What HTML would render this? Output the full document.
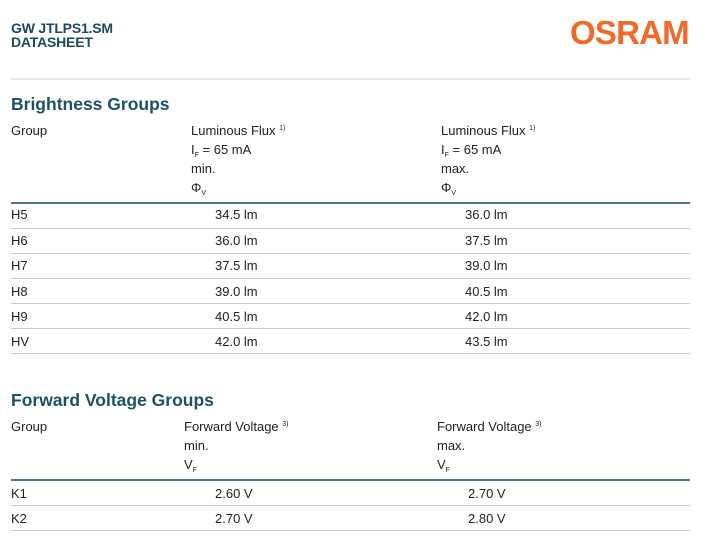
<!DOCTYPE html>
<html><head><style>
body{margin:0;width:705px;height:558px;background:#fff;position:relative;font-family:"Liberation Sans",sans-serif;color:#222;overflow:hidden}
.a{position:absolute;white-space:nowrap;font-size:13px;line-height:16px}
.t{color:#1d4a5c;font-weight:bold;font-size:14px;line-height:14px;letter-spacing:-0.2px}
.h{color:#1e5066;font-weight:bold;font-size:17.5px}
.l{position:absolute;left:11px;width:679px;height:1px;background:#c8c8c8}
.k{position:absolute;left:11px;width:679px;height:2px;background:#4e7488}
sup{font-size:7px;vertical-align:5px;line-height:0}
sub{font-size:7px;vertical-align:-3px;line-height:0}
</style></head><body>
<div class="a t" style="left:11px;top:21px">GW JTLPS1.SM</div>
<div class="a t" style="left:11px;top:35px">DATASHEET</div>
<div class="a" style="left:570px;top:15px;font-size:33px;line-height:36px;font-weight:bold;color:#f26a2a;letter-spacing:-0.8px">OSRAM</div>
<div style="position:absolute;left:11px;top:78px;width:679px;height:2px;background:#e3e8ec"></div>

<div class="a h" style="left:11px;top:94px;line-height:20px">Brightness Groups</div>
<div class="a" style="left:11px;top:123px">Group</div>
<div class="a" style="left:191px;top:123px">Luminous Flux <sup>1)</sup></div>
<div class="a" style="left:191px;top:142px">I<sub>F</sub> = 65 mA</div>
<div class="a" style="left:191px;top:161px">min.</div>
<div class="a" style="left:191px;top:180px">Φ<sub>V</sub></div>
<div class="a" style="left:441px;top:123px">Luminous Flux <sup>1)</sup></div>
<div class="a" style="left:441px;top:142px">I<sub>F</sub> = 65 mA</div>
<div class="a" style="left:441px;top:161px">max.</div>
<div class="a" style="left:441px;top:180px">Φ<sub>V</sub></div>
<div class="k" style="top:202px"></div>
<div class="a" style="left:11px;top:207px">H5</div><div class="a" style="left:215px;top:207px">34.5 lm</div><div class="a" style="left:465px;top:207px">36.0 lm</div>
<div class="l" style="top:228px"></div>
<div class="a" style="left:11px;top:233px">H6</div><div class="a" style="left:215px;top:233px">36.0 lm</div><div class="a" style="left:465px;top:233px">37.5 lm</div>
<div class="l" style="top:253px"></div>
<div class="a" style="left:11px;top:258px">H7</div><div class="a" style="left:215px;top:258px">37.5 lm</div><div class="a" style="left:465px;top:258px">39.0 lm</div>
<div class="l" style="top:278px"></div>
<div class="a" style="left:11px;top:284px">H8</div><div class="a" style="left:215px;top:284px">39.0 lm</div><div class="a" style="left:465px;top:284px">40.5 lm</div>
<div class="l" style="top:303px"></div>
<div class="a" style="left:11px;top:309px">H9</div><div class="a" style="left:215px;top:309px">40.5 lm</div><div class="a" style="left:465px;top:309px">42.0 lm</div>
<div class="l" style="top:328px"></div>
<div class="a" style="left:11px;top:334px">HV</div><div class="a" style="left:215px;top:334px">42.0 lm</div><div class="a" style="left:465px;top:334px">43.5 lm</div>
<div class="l" style="top:353px"></div>

<div class="a h" style="left:11px;top:390px;line-height:20px">Forward Voltage Groups</div>
<div class="a" style="left:11px;top:419px">Group</div>
<div class="a" style="left:184px;top:419px">Forward Voltage <sup>3)</sup></div>
<div class="a" style="left:184px;top:438px">min.</div>
<div class="a" style="left:184px;top:457px">V<sub>F</sub></div>
<div class="a" style="left:437px;top:419px">Forward Voltage <sup>3)</sup></div>
<div class="a" style="left:437px;top:438px">max.</div>
<div class="a" style="left:437px;top:457px">V<sub>F</sub></div>
<div class="k" style="top:479px"></div>
<div class="a" style="left:11px;top:486px">K1</div><div class="a" style="left:215px;top:486px">2.60 V</div><div class="a" style="left:468px;top:486px">2.70 V</div>
<div class="l" style="top:505px"></div>
<div class="a" style="left:11px;top:511px">K2</div><div class="a" style="left:215px;top:511px">2.70 V</div><div class="a" style="left:468px;top:511px">2.80 V</div>
<div class="l" style="top:530px"></div>
</body></html>
